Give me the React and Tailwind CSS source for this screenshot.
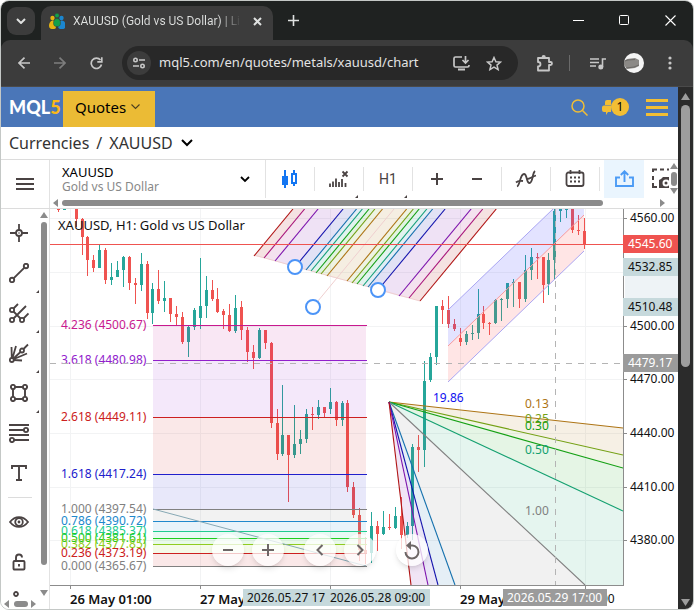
import React from "react";

const SITE_FONT = "font-['Noto_Sans','Open_Sans',sans-serif]";

/* ---------- small shared pieces ---------- */

function Svg({ w = 24, h = 24, className = "", children, sw = 2, box }) {
  return (
    <svg
      width={w}
      height={h}
      viewBox={box || `0 0 ${w} ${h}`}
      fill="none"
      stroke="currentColor"
      strokeWidth={sw}
      className={`shrink-0 ${className}`}
      aria-hidden="true"
    >
      {children}
    </svg>
  );
}

function Arrow({ dir, className = "" }) {
  const pts = {
    up: "0,6 4,0 8,6",
    down: "0,1 8,1 4,7",
    left: "6,0 6,8 1,4",
    right: "1,0 1,8 6,4",
  }[dir];
  return (
    <svg width="8" height="8" viewBox="0 0 8 8" className={`shrink-0 fill-[#8b8b8b] ${className}`} aria-hidden="true">
      <polygon points={pts} />
    </svg>
  );
}

/* ---------- browser frame ---------- */

function TabStrip() {
  return (
    <div className="flex h-[39px] items-end bg-[#1f2221] text-[#dfe1e0]">
      <button aria-label="Search tabs" className="mb-[5px] ml-[6px] flex h-7 w-7 items-center justify-center rounded-[9px] bg-[#3c3c3c]">
        <Svg w={10} h={6}><path d="M1 1l4 4 4-4" /></Svg>
      </button>
      <div className="ml-[6px] flex h-[34px] w-[232px] items-center rounded-t-[10px] bg-[#3c3c3c] pb-1 pl-2">
        <svg width="16" height="17" viewBox="0 0 16 17" className="shrink-0" aria-hidden="true">
          <circle cx="3.5" cy="5" r="2.2" fill="#e5b411" />
          <path d="M0 13c0-3 1.500-5.500 4-5.500S7 10 7 13s-1 3-3 3-4-.5-4-3z" fill="#e5b411" />
          <circle cx="12.500" cy="5" r="2.200" fill="#1b86cf" />
          <path d="M9 13c0-3 1.500-5.500 4-5.500s3.500 2.500 3.500 5.500-2 3-4 3-3.500-.5-3.500-3z" fill="#1b86cf" />
          <circle cx="8" cy="2.500" r="2.300" fill="#12a04b" stroke="#3c3c3c" strokeWidth=".5" />
          <path d="M4.500 10c0-3 1.500-4.500 3.500-4.500s3.500 1.500 3.500 4.500-1.500 3.500-3.500 3.500S4.500 13 4.500 10z" fill="#12a04b" stroke="#3c3c3c" strokeWidth=".5" />
        </svg>
        <div className="ml-2 w-[168px] overflow-hidden bg-gradient-to-r from-[#dfe1e0] from-88% to-[#3c3c3c] bg-clip-text font-['Roboto',sans-serif] text-xs whitespace-nowrap text-transparent">
          XAUUSD (Gold vs US Dollar) | Li
        </div>
        <button aria-label="Close tab" className="ml-3">
          <Svg w={9} h={9}><path d="M1 1l7 7M8 1l-7 7" /></Svg>
        </button>
      </div>
      <button aria-label="New tab" className="mb-[14px] ml-[15px]">
        <Svg w={11} h={11} sw={1.6}><path d="M5.500 0v11M0 5.500h11" /></Svg>
      </button>
      <div className="mb-[14px] ml-auto flex items-center gap-[35px] pr-[17px] text-white">
        <button aria-label="Minimize"><Svg w={11} h={11} sw={1}><path d="M0 5.500h11" /></Svg></button>
        <button aria-label="Maximize"><Svg w={11} h={11} sw={1}><rect x=".5" y=".5" width="9" height="9" rx="1" /></Svg></button>
        <button aria-label="Close window"><Svg w={11} h={11} sw={1.1}><path d="M.5.5l10 10M10.500.5l-10 10" /></Svg></button>
      </div>
    </div>
  );
}

function AddressBar() {
  return (
    <div className="bg-[#1f2221]">
      <div className="flex h-[47px] items-center rounded-t-[9px] border-b border-[#4a4a4a] bg-[#3c3c3c] pl-[17px] text-[#c7c7c7]">
        <button aria-label="Back"><Svg w={12} h={12} sw={1.7}><path d="M12 6H1M6.500.7L1 6l5.500 5.300" /></Svg></button>
        <button aria-label="Forward" className="ml-6 text-[#7d7d7d]"><Svg w={12} h={12} sw={1.7}><path d="M0 6h11M5.500.7L11 6l-5.500 5.300" /></Svg></button>
        <button aria-label="Reload" className="ml-6">
          <Svg w={13} h={13} sw={1.7}><path d="M11.500 7.500A5.200 5.200 0 1 1 10.500 3" /><path d="M11.800.3v4.500H7.300" /></Svg>
        </button>
        <div className="ml-[19px] flex h-[34px] w-[396px] items-center rounded-full bg-[#282828] pl-[5px]">
          <button aria-label="Site information" className="flex h-6 w-6 shrink-0 items-center justify-center rounded-full bg-[#3c3c3c]">
            <Svg w={12} h={12} sw={1.6}>
              <circle cx="2.500" cy="3" r="1.700" /><path d="M6 3h6M0 9h6" /><circle cx="9.500" cy="9" r="1.700" />
            </Svg>
          </button>
          <input
            aria-label="Address"
            readOnly
            value="mql5.com/en/quotes/metals/xauusd/chart"
            className="ml-2 min-w-0 flex-1 bg-transparent text-[13px] text-[#e3e3e3] outline-none"
          />
          <button aria-label="Install app" className="mr-4">
            <Svg w={17} h={15} sw={1.7}>
              <path d="M9 1H2.500Q1 1 1 2.500v7Q1 11 2.500 11h12Q16 11 16 9.500V9" /><path d="M12.500 0v6M9.500 4l3 3 3-3" /><path d="M5 13.500h7" strokeWidth="2" />
            </Svg>
          </button>
          <button aria-label="Bookmark" className="mr-4">
            <Svg w={16} h={15} sw={1.5}><path d="M8 1.500l1.900 4.200 4.600.4-3.500 3 1.100 4.500L8 11.200l-4.100 2.400L5 9.100l-3.500-3 4.600-.4z" /></Svg>
          </button>
        </div>
        <button aria-label="Extensions" className="ml-[18px]">
          <Svg w={17} h={17} sw={1.8}>
            <path d="M2 3h11v4h1.500a1.200 1.200 0 0 1 0 3H13v5.500H2v-4c3.300 0 3.300-4.500 0-4.500z" strokeLinejoin="round" /><path d="M6.500 3V2.200a1.200 1.200 0 0 1 2.400 0V3" />
          </Svg>
        </button>
        <span className="ml-4 h-4 w-px bg-[#6a6a6a]" />
        <button aria-label="Media" className="ml-5">
          <Svg w={16} h={13} sw={1.6}><path d="M0 2h9M0 5.500h9M0 9h6M12.500 10V2h3.500" /><circle cx="10.800" cy="10" r="1.700" fill="currentColor" /></Svg>
        </button>
        <button aria-label="Profile" className="ml-[18px]">
          <svg width="20" height="20" viewBox="0 0 20 20" aria-hidden="true">
            <circle cx="10" cy="10" r="10" fill="#f4f4f4" />
            <path d="M0 8l3-2 8-1 4 2v6l-4 2-8 1-3-4z" fill="#8b8986" />
            <path d="M1 8l3-1 7-.5M2 15l8-1 5-2" stroke="#6b6966" fill="none" />
          </svg>
        </button>
        <button aria-label="Menu" className="ml-6">
          <svg width="4" height="14" viewBox="0 0 4 14" className="fill-[#c7c7c7]" aria-hidden="true">
            <circle cx="2" cy="2" r="1.600" /><circle cx="2" cy="7" r="1.600" /><circle cx="2" cy="12" r="1.600" />
          </svg>
        </button>
      </div>
    </div>
  );
}

/* ---------- site header ---------- */

function SiteHeader() {
  return (
    <header className="flex h-10 items-end bg-[#4a76b8] pl-2">
      <a href="#home" className="w-[54px] self-center font-['Lato',sans-serif] text-[18px] leading-none font-black text-white">
        MQL<span className="text-[#fbb817]">5</span>
      </a>
      <button className="flex h-9 w-[92px] items-center bg-[#ebbb35] pb-1 pl-3 text-[15px] text-black">
        Quotes
        <Svg w={9} h={6} sw={1.1} className="ml-[5px] text-[#4d4020]"><path d="M.5.500l4 4 4-4" /></Svg>
      </button>
      <div className="ml-auto flex items-center self-center pr-[10px] text-[#f2be34]">
        <button aria-label="Search"><Svg w={17} h={17} sw={1.5}><circle cx="7" cy="7" r="6" /><path d="M11.500 11.500l5 5" /></Svg></button>
        <button aria-label="Messages, 1 new" className="ml-[14px] flex items-center">
          <svg width="9" height="16" viewBox="0 0 9 16" className="fill-[#f2be34]" aria-hidden="true">
            <path d="M5 1h4v5H3V3q0-2 2-2z" /><path d="M2 6.500h7V13H6l-2 3v-3H2q-2 0-2-2V8.500q0-2 2-2z" />
          </svg>
          <span className="flex h-[18px] w-[18px] items-center justify-center rounded-full bg-[#f2be34] text-xs text-black">1</span>
        </button>
        <button aria-label="Main menu" className="ml-[17px]"><Svg w={22} h={17} sw={3}><path d="M0 1.500h22M0 8.500h22M0 15.500h22" /></Svg></button>
      </div>
    </header>
  );
}

function Breadcrumb() {
  return (
    <nav className="flex h-[33px] items-center border-b border-[#dcdcdc] bg-white pl-2 text-base text-[#333]">
      <a href="#currencies">Currencies</a>
      <span className="mx-[7px]">/</span>
      <a href="#xauusd">XAUUSD</a>
      <Svg w={12} h={8} sw={2} className="ml-2 text-black"><path d="M1 1l5 5 5-5" /></Svg>
    </nav>
  );
}

/* ---------- chart toolbar ---------- */

function Cell({ label, divider, children, corner }) {
  return (
    <>
      <button aria-label={label} className="relative flex h-[38px] w-12 shrink-0 items-center justify-center text-[#4a4343]">
        {children}
        {corner && <svg width="3" height="3" viewBox="0 0 3 3" className="absolute right-[5px] bottom-0" aria-hidden="true"><path d="M3 0v3H0z" fill="#4a4343" /></svg>}
      </button>
      {divider && <span className="h-6 w-px shrink-0 bg-[#e2e2e2]" />}
    </>
  );
}

function Toolbar() {
  return (
    <div className="flex h-[49px] border-b border-[#dcdcdc] bg-white">
      <button aria-label="Menu" className="flex w-[49px] shrink-0 items-center justify-center border-r border-[#e2e2e2] text-[#4a4343]">
        <Svg w={18} h={12} sw={1.8}><path d="M0 1h18M0 6h18M0 11h18" /></Svg>
      </button>
      <div className="flex min-w-0 flex-1 flex-col">
        <div className="flex h-[38px] items-center overflow-hidden">
          <button className="flex h-full w-[216px] shrink-0 items-center justify-between border-r border-[#e2e2e2] pr-[15px] pl-3 text-left">
            <span>
              <span className="block text-[13px] leading-4 text-black">XAUUSD</span>
              <span className="block text-xs leading-[14px] text-[#888]">Gold vs US Dollar</span>
            </span>
            <Svg w={10} h={7} sw={1.8}><path d="M1 1l4 4 4-4" /></Svg>
          </button>
          <Cell label="Chart type" divider>
            <svg width="16" height="20" viewBox="0 0 16 20" className="text-[#1476f2]" aria-hidden="true">
              <path d="M3 1v18" stroke="currentColor" strokeWidth="2" /><rect x="0" y="7" width="6" height="9" fill="currentColor" />
              <path d="M12 1v4M12 14v3" stroke="currentColor" strokeWidth="2" /><rect x="10" y="5" width="4" height="9" fill="white" stroke="currentColor" strokeWidth="2" />
            </svg>
          </Cell>
          <Cell label="Volumes" divider corner>
            <Svg w={22} h={18} sw={1.8}><path d="M2 13.500V17M5 11.500V17M8 8.500V17M11 12V17M14 9V17M17.500 13V17" /><path d="M14.500 1.500l5 5M19.500 1.500l-5 5" /></Svg>
          </Cell>
          <Cell label="Timeframe" divider corner><span className="font-['Roboto',sans-serif] text-sm">H1</span></Cell>
          <Cell label="Zoom in"><Svg w={12} h={12}><path d="M6 0v12M0 6h12" /></Svg></Cell>
          <div className="-mx-2 flex"><Cell label="Zoom out"><Svg w={12} h={12}><path d="M1 6h10" /></Svg></Cell></div>
          <span className="ml-2 h-6 w-px shrink-0 bg-[#e2e2e2]" />
          <Cell label="Indicators" divider>
            <Svg w={22} h={18} sw={1.8}><path d="M2 16.500c3-1 3-12.500 7-12.500 3.500 0 2 9 5.500 9C18 13 17 3.500 20 1" /><path d="M1 12.500c2-2 4-2 7-1.500M12 9c3 0 5-2.500 9-3.500" /></Svg>
          </Cell>
          <Cell label="Calendar" divider>
            <Svg w={20} h={18} sw={1.8}>
              <rect x="1.500" y="2.500" width="17" height="13.500" rx="2" /><path d="M5.500 0v4M14.500 0v4" />
              <path d="M5 7.500h2M9 7.500h2M13 7.500h2M5 11.500h2M9 11.500h2M13 11.500h2" />
            </Svg>
          </Cell>
          <button aria-label="Share" className="ml-1 flex h-[38px] w-10 shrink-0 items-center justify-center bg-[#eaf5fe] text-[#4c9bf5]">
            <Svg w={19} h={18} sw={1.9}><path d="M5 7.500H1V16h17V7.500h-4M9.500 12V2M5.800 5l3.700-3.700L13.200 5" /></Svg>
          </button>
          <div className="ml-2 flex min-w-0 flex-1 overflow-hidden text-[#4a4343]">
            <button aria-label="Screenshot" className="shrink-0">
              <Svg w={26} h={22} sw={2}>
                <path d="M1 4V1.500h4M8 1.500h4M15 1.500h4M1 8v4M1 15v4h4" />
                <path d="M7 12l2-1 2-2h6l2 2h4v9H7z" fill="currentColor" stroke="none" /><circle cx="14" cy="15" r="2.500" stroke="white" />
              </Svg>
            </button>
          </div>
          <div className="flex h-full w-[9px] shrink-0 flex-col items-center justify-between py-[3px]">
            <Arrow dir="up" /><span className="h-[14px] w-[6px] rounded-full bg-[#8b8b8b]" /><Arrow dir="down" />
          </div>
        </div>
        <div className="flex h-[10px] items-center pr-[11px] pl-[2px]">
          <Arrow dir="left" />
          <span className="mr-14 ml-[2px] h-[6px] flex-1 rounded-full bg-[#8b8b8b]" />
          <Arrow dir="right" />
        </div>
      </div>
    </div>
  );
}

/* ---------- drawing tools ---------- */

function Tool({ label, children, corner }) {
  return (
    <button aria-label={label} className="relative flex h-10 w-full items-center justify-center pr-[2px]">
      {children}
      {corner && <svg width="3" height="3" viewBox="0 0 3 3" className="absolute right-0 bottom-0" aria-hidden="true"><path d="M3 0v3H0z" fill="#4a4343" /></svg>}
    </button>
  );
}

function Sidebar() {
  return (
    <aside className="flex w-[49px] shrink-0 border-r border-[#e2e2e2] bg-white text-[#4a4343]">
      <div className="flex w-[38px] flex-col pt-1">
        <Tool label="Crosshair"><Svg w={18} h={18} sw={1.8}><circle cx="9" cy="9" r="3" /><path d="M9 0v7M9 11v7M0 9h7M11 9h7" /><circle cx="9" cy="9" r=".8" fill="currentColor" stroke="none" /></Svg></Tool>
        <Tool label="Trend line" corner><Svg w={20} h={20} sw={1.9}><circle cx="3" cy="17" r="2.200" /><circle cx="17" cy="3" r="2.200" /><path d="M4.800 15.200L15.200 4.800" /></Svg></Tool>
        <Tool label="Pitchfork" corner>
          <Svg w={20} h={20} sw={1.8}><circle cx="3" cy="7" r="2.100" /><circle cx="3" cy="17" r="2.100" /><circle cx="13" cy="17" r="2.100" /><path d="M4.500 5.500L9 1M4.500 15.500L17 3M14.500 15.500L19.500 10.500M4.500 8.500l7 7" /></Svg>
        </Tool>
        <Tool label="Gann fan" corner>
          <Svg w={20} h={20} sw={1.8}><circle cx="2.800" cy="17" r="2" /><circle cx="13" cy="7.500" r="2" /><path d="M2.800 15L2.500 4M3.500 15L7 3M4.500 15.500l7-6.500M14.500 6L19 1.500M5 16l13-5.500M5 17l8 .5" /></Svg>
        </Tool>
        <Tool label="Rectangle" corner>
          <Svg w={18} h={18} sw={1.9}><circle cx="3" cy="3" r="2.100" /><circle cx="15" cy="3" r="2.100" /><circle cx="3" cy="15" r="2.100" /><circle cx="15" cy="15" r="2.100" /><path d="M5 3h8M5 15h8M3 5v8M15 5v8" /></Svg>
        </Tool>
        <Tool label="Fibonacci">
          <Svg w={20} h={20} sw={1.9}><path d="M0 2h20M0 7h15M0 12h20M5 17h15" /><circle cx="17" cy="7" r="2.100" fill="white" /><circle cx="3" cy="17" r="2.100" fill="white" /></Svg>
        </Tool>
        <Tool label="Text"><Svg w={16} h={16} sw={1.9}><path d="M1 4V1h14v3M8 1v14M5 15h6" /></Svg></Tool>
        <span className="my-1 ml-[7px] h-px w-6 shrink-0 bg-[#dcdcdc]" />
        <Tool label="Visibility"><Svg w={20} h={12} sw={1.8}><path d="M1 6c5-6.500 13-6.500 18 0-5 6.500-13 6.500-18 0z" /><circle cx="10" cy="6" r="3.800" /><circle cx="10" cy="6" r="1.400" fill="currentColor" stroke="none" /></Svg></Tool>
        <Tool label="Lock"><Svg w={14} h={18} sw={1.9}><rect x="1.500" y="8" width="11" height="8.500" rx="1" /><path d="M4 8V4.500a3 3 0 0 1 6 0M7 11v2.500" /></Svg></Tool>
        <div className="flex-1 overflow-hidden pt-[9px] pl-3"><Svg w={6} h={6} sw={1.8}><circle cx="3" cy="3" r="2" /></Svg></div>
        <div className="mb-[2px] flex h-[7px] shrink-0 items-center justify-between pr-px pl-[2px]">
          <Arrow dir="left" /><span className="h-[6px] w-[14px] rounded-full bg-[#8b8b8b]" /><Arrow dir="right" />
        </div>
      </div>
      <div className="flex flex-1 flex-col items-center pt-[3px] pb-3">
        <Arrow dir="up" />
        <span className="mt-[2px] mb-6 w-[6px] flex-1 rounded-full bg-[#8b8b8b]" />
        <Arrow dir="down" />
      </div>
    </aside>
  );
}

/* ---------- chart ---------- */

const UP = "#26a69a";
const DOWN = "#ef5350";

// x, wick top, body top, body bottom, wick bottom, direction
const CANDLES = [
  [58, 209, 209, 209, 212, 0], [64, 209, 209, 209, 210, 1], [76, 209, 209, 219, 227, 0], [82, 218, 219, 237, 255, 0],
  [87, 236, 237, 260, 276, 0], [93, 255, 260, 268, 272, 0], [99, 245, 250, 268, 268, 1], [105, 248, 250, 280, 284, 0],
  [111, 263, 277, 280, 285, 1], [117, 261, 270, 277, 277, 1], [123, 256, 257, 270, 287, 1], [129, 256, 257, 283, 290, 0],
  [135, 278, 283, 285, 304, 0], [141, 253, 264, 285, 291, 1], [147, 261, 264, 313, 319, 0], [152, 283, 289, 313, 324, 1],
  [158, 270, 289, 301, 304, 0], [164, 281, 298, 301, 312, 1], [170, 298, 298, 314, 322, 0], [176, 306, 314, 317, 325, 0],
  [182, 312, 317, 342, 344, 0], [188, 326, 327, 342, 357, 1], [194, 308, 310, 327, 330, 1], [200, 258, 306, 318, 329, 1],
  [206, 276, 290, 306, 318, 1], [212, 280, 290, 299, 301, 0], [217, 288, 299, 312, 313, 0], [223, 309, 311, 315, 329, 0],
  [229, 304, 315, 331, 332, 0], [235, 295, 308, 331, 333, 1], [241, 301, 307, 330, 340, 0], [247, 327, 330, 352, 362, 0],
  [253, 345, 352, 358, 369, 0], [259, 328, 330, 358, 359, 1], [265, 330, 330, 343, 349, 0], [271, 342, 343, 423, 428, 0],
  [277, 409, 423, 454, 460, 0], [282, 385, 435, 454, 456, 1], [288, 435, 435, 455, 502, 0], [294, 405, 444, 455, 458, 1],
  [300, 430, 439, 444, 454, 1], [306, 409, 414, 439, 443, 1], [312, 407, 414, 415, 430, 0], [318, 400, 407, 415, 419, 1],
  [324, 407, 407, 413, 417, 0], [330, 388, 402, 409, 414, 1], [336, 401, 402, 420, 426, 0], [342, 401, 403, 420, 426, 1],
  [347, 400, 403, 487, 492, 0], [353, 482, 487, 515, 518, 0], [359, 508, 515, 550, 561, 0], [365, 537, 550, 554, 564, 0],
  [371, 512, 526, 553, 563, 1], [377, 521, 526, 534, 551, 0], [383, 511, 527, 534, 535, 1], [389, 514, 527, 528, 530, 0],
  [395, 507, 516, 528, 529, 1], [401, 497, 516, 535, 549, 0], [407, 522, 526, 535, 538, 1], [412, 444, 447, 526, 540, 1],
  [418, 435, 447, 450, 472, 0], [424, 361, 381, 450, 467, 1], [430, 353, 357, 380, 382, 1], [436, 306, 306, 357, 365, 1],
  [442, 300, 306, 310, 324, 0], [448, 296, 310, 324, 328, 0], [454, 319, 324, 329, 331, 0], [460, 328, 338, 342, 346, 0],
  [466, 331, 334, 342, 345, 1], [472, 325, 333, 334, 340, 1], [478, 289, 314, 333, 339, 1], [483, 306, 314, 323, 329, 0],
  [489, 322, 323, 324, 335, 0], [495, 299, 300, 323, 324, 1], [501, 298, 299, 300, 321, 1], [507, 283, 283, 299, 308, 1],
  [513, 279, 282, 283, 307, 1], [519, 282, 282, 299, 308, 0], [525, 255, 270, 299, 302, 1], [531, 248, 257, 270, 280, 1],
  [537, 253, 257, 258, 279, 0], [543, 257, 257, 285, 303, 0], [548, 253, 260, 284, 295, 1], [554, 209, 211, 260, 280, 1],
  [560, 209, 209, 211, 222, 1], [566, 209, 209, 210, 218, 1], [572, 209, 209, 230, 233, 0], [578, 215, 230, 231, 235, 0],
  [584, 218, 231, 245, 249, 0],
];

const FIB = [
  [325, "#c8188f", "4.236 (4500.67)"], [360, "#9120cc", "3.618 (4480.98)"], [417, "#cc2020", "2.618 (4449.11)"],
  [474, "#2020cc", "1.618 (4417.24)"], [509, "#808080", "1.000 (4397.54)"], [521, "#2088cc", "0.786 (4390.72)"],
  [531, "#20cc90", "0.618 (4385.37)"], [538, "#20cc20", "0.500 (4381.61)"], [544, "#90cc20", "0.382 (4377.85)"],
  [553, "#cc2020", "0.236 (4373.19)"], [566, "#808080", "0.000 (4365.67)"],
];

// pitchfork rays: starting x along the base line, colour
const FORK = [
  [254, "#b01414"], [264, "#a8147a"], [275, "#7d14ad"], [295, "#1414ad"], [306, "#146fad"], [311, "#14a07a"],
  [316, "#14a014"], [321, "#74a014"], [327, "#ad7414"], [347, "#ad7414"], [352, "#74a014"], [357, "#14a014"],
  [363, "#14a07a"], [368, "#146fad"], [378, "#1414ad"], [399, "#7d14ad"], [409, "#a8147a"], [420, "#b01414"],
];
const forkY = (x) => Math.round(255.5 + (x - 254) * 0.277);
const forkTop = (x) => x + (forkY(x) - 209) * 0.829;

// fan rays from the apex to the edge of the plot
const APEX = [389, 402];
const FAN = [
  [623, 428, "#ad7414"], [623, 455, "#74a014"], [623, 468, "#14a014"], [623, 511, "#14a070"], [585, 585, "#808080"],
  [455, 585, "#1470ad"], [438, 585, "#1414ad"], [428, 585, "#7d14ad"], [411, 585, "#b01414"],
];
const FAN_FILL = ["#ad7414", "#74a014", "#14a014", "#14a070", "#808080", "#1470ad", "#3414ad", "#7d14ad"];

const PRICES = [[218, "4560.00"], [326, "4500.00"], [379, "4470.00"], [433, "4440.00"], [487, "4410.00"], [540, "4380.00"]];

function Chart() {
  return (
    <div className={`relative min-w-0 flex-1 bg-white ${SITE_FONT}`}>
      <svg viewBox="50 209 628 400" className="block h-auto w-full" role="img" aria-label="XAUUSD H1 chart">
        <clipPath id="plot"><rect x="50" y="209" width="573" height="376" /></clipPath>
        <g clipPath="url(#plot)">
          <g stroke="#f2f3f4">
            {[218, 272, 326, 379, 433, 487, 540].map((y) => <path key={y} d={`M50 ${y + 0.5}H623`} />)}
            {[70, 200, 330, 460, 585].map((x) => <path key={x} d={`M${x + 0.5} 209V585`} />)}
          </g>

          {CANDLES.map(([x, wt, bt, bb, wb, up]) => (
            <g key={x} fill={up ? UP : DOWN} shapeRendering="crispEdges">
              <rect x={x} y={wt} width="1" height={Math.max(1, wb - wt)} />
              <rect x={x - 1} y={bt} width="3" height={Math.max(1, bb - bt)} />
            </g>
          ))}

          {FIB.slice(0, -1).map(([y, c], i) => (
            <rect key={y} x="153" y={y} width="213" height={FIB[i + 1][0] - y} fill={c} fillOpacity=".1" />
          ))}
          {FIB.map(([y, c, t]) => (
            <g key={t}>
              <path d={`M153 ${y + 0.5}H367`} stroke={c} />
              <text x="61" y={y + 4} fill={c} fontSize="12">{t}</text>
            </g>
          ))}
          <path d="M153 509L366 566" stroke="#86a8b4" />

          {FORK.slice(0, -1).map(([x, c], i) => {
            const n = FORK[i + 1];
            const fill = i < 9 ? c : n[1];
            return <polygon key={x} points={`${x},${forkY(x)} ${n[0]},${forkY(n[0])} ${forkTop(n[0])},209 ${forkTop(x)},209`} fill={fill} fillOpacity=".12" />;
          })}
          <path d="M313 307L394 209" stroke="#efcfcf" />
          <path d="M254 255L420 301" stroke="#efcfcf" />
          {FORK.map(([x, c]) => <path key={x} d={`M${x} ${forkY(x)}L${forkTop(x)} 209`} stroke={c} strokeWidth="1.100" />)}

          <polygon points="448,310 553,209 584,209 584,215 448,346" fill="#5050ff" fillOpacity=".16" />
          <polygon points="448,346 584,215 584,251 448,382" fill="#ff5050" fillOpacity=".15" />
          <path d="M448 310L553 209M448 382L584 251" stroke="#aaa6f2" />
          <path d="M448 346L584 215" stroke="#f79a9e" />

          {FAN_FILL.map((c, i) => {
            const [a, b] = [FAN[i], FAN[i + 1]];
            const corner = i === 3 ? "623,585 " : "";
            return <polygon key={c} points={`${APEX} ${a[0]},${a[1]} ${corner}${b[0]},${b[1]}`} fill={c} fillOpacity=".11" />;
          })}
          {FAN.map(([x, y, c]) => <path key={c} d={`M${APEX}L${x} ${y}`} stroke={c} strokeWidth="1.100" />)}

          <g fontSize="12">
            <text x="433" y="402" fill="#1010f0">19.86</text>
            <text x="525" y="408" fill="#ad7414">0.13</text>
            <text x="525" y="423" fill="#74a014">0.25</text>
            <text x="525" y="430" fill="#14a014">0.30</text>
            <text x="525" y="454" fill="#14a070">0.50</text>
            <text x="525" y="515" fill="#808080">1.00</text>
          </g>

          <path d="M50 244.500H623" stroke="#ef5350" />
          <path d="M50 363.500H623M555.500 209V585" stroke="#b4b4b4" strokeDasharray="6 6" />
          <g fill="white" stroke="#4c94f7" strokeWidth="2">
            <circle cx="295" cy="267" r="7" /><circle cx="378" cy="290" r="7" /><circle cx="313" cy="307" r="7" />
          </g>
          <text x="58" y="230" fontSize="13" fill="#111">XAUUSD, H1: Gold vs US Dollar</text>
        </g>

        <path d="M623.500 209V585.500M50 585.500H624" stroke="#8c8c8c" fill="none" />
        <g fontSize="12" fill="#111">
          {PRICES.map(([y, t]) => (
            <g key={t}><path d={`M624 ${y + 0.5}h3`} stroke="#8c8c8c" /><text x="630" y={y + 4}>{t}</text></g>
          ))}
          <rect x="625" y="276" width="53" height="22" fill="#eef3f6" />
          <rect x="623" y="258" width="55" height="18" fill="#c6d9dc" /><text x="628" y="271">4532.85</text>
          <rect x="623" y="298" width="55" height="18" fill="#c6d9dc" /><text x="628" y="311">4510.48</text>
          <rect x="623" y="235" width="55" height="18" fill="#ef5350" /><text x="628" y="248" fill="white">4545.60</text>
          <rect x="623" y="354" width="55" height="18" fill="#9b9b9b" /><text x="628" y="367" fill="white">4479.17</text>
        </g>

        <path d="M70.500 586v3M200.500 586v3M330.500 586v3M460.500 586v3M585.500 586v3" stroke="#8c8c8c" />
        <g fontSize="12" fill="#111">
          <g fontWeight="600" fontSize="13">
            <text x="70" y="604">26 May 01:00</text><text x="200" y="604">27 May</text><text x="460" y="604">29 May</text>
          </g>
          <text x="601" y="603">00</text>
          <rect x="243" y="589" width="104" height="17" fill="#c6d9dc" /><text x="247" y="602">2026.05.27 17</text>
          <rect x="329" y="589" width="101" height="17" fill="#c6d9dc" /><text x="330" y="602">2026.05.28 09:00</text>
          <rect x="503" y="589" width="104" height="17" fill="#9b9b9b" /><text x="507" y="602" fill="white">2026.05.29 17:00</text>
        </g>
      </svg>

      <div className="absolute bottom-[43px] left-[162px] flex text-[#6d6666]">
        {[
          ["Zoom out", "", <path key="p" d="M1 6h10" />],
          ["Zoom in", "ml-2", <path key="p" d="M0 6h12M6 0v12" />],
          ["Scroll left", "ml-5", <path key="p" d="M8.500 1l-5 5 5 5" />],
          ["Scroll right", "ml-2", <path key="p" d="M3.500 1l5 5-5 5" />],
        ].map(([label, gap, icon]) => (
          <button key={label} aria-label={label} className={`flex h-8 w-8 items-center justify-center rounded-full bg-white/75 shadow-md ${gap}`}>
            <Svg w={12} h={12}>{icon}</Svg>
          </button>
        ))}
        <button aria-label="Reset chart" className="ml-5 flex h-8 w-8 items-center justify-center rounded-full bg-white/75 shadow-md">
          <Svg w={18} h={19} sw={2}><path d="M6 4.500h3.500a6.500 6.500 0 1 1-7 6.500" /><path d="M8 0v9L3 4.500z" fill="currentColor" stroke="none" /></Svg>
        </button>
      </div>
    </div>
  );
}

export default function App() {
  return (
    <div className={`min-h-screen bg-white ${SITE_FONT}`}>
      <div className="flex min-h-screen flex-col overflow-hidden rounded-[9px] border border-[#c4c8c6]">
        <TabStrip />
        <AddressBar />
        <div className="flex flex-1">
          <div className="flex min-w-0 flex-1 flex-col">
            <SiteHeader />
            <Breadcrumb />
            <Toolbar />
            <main className="flex flex-1">
              <Sidebar />
              <Chart />
            </main>
          </div>
          <div className="flex w-[15px] shrink-0 flex-col items-center bg-[#2b2b2b] pt-[6px] pb-[3px]">
            <svg width="9" height="7" viewBox="0 0 9 7" className="shrink-0 fill-[#9d9d9d]" aria-hidden="true"><path d="M4.500 0L9 7H0z" /></svg>
            <span className="mt-[5px] h-[262px] w-[9px] rounded-full bg-[#9d9d9d]" />
            <svg width="9" height="7" viewBox="0 0 9 7" className="mt-auto shrink-0 fill-[#9d9d9d]" aria-hidden="true"><path d="M0 0h9L4.500 7z" /></svg>
          </div>
        </div>
      </div>
    </div>
  );
}
